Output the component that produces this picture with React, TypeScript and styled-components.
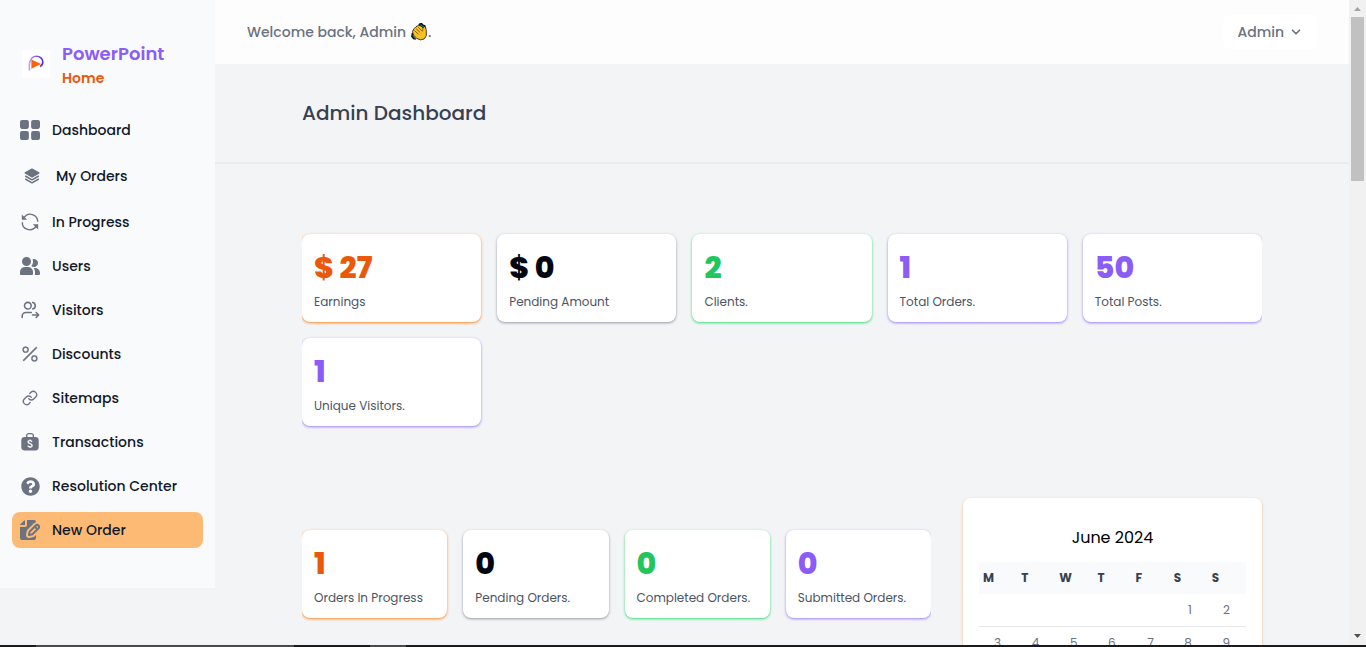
import React from "react";
import styled, { createGlobalStyle } from "styled-components";
import { BiSolidLayer } from "react-icons/bi";
import { BsPercent } from "react-icons/bs";
import { FaQuestionCircle } from "react-icons/fa";
import { LuChevronDown, LuLink } from "react-icons/lu";

const GlobalStyle = createGlobalStyle`
  *, *::before, *::after { box-sizing: border-box; }
  body {
    margin: 0;
    overflow: hidden;
    background: #f3f4f6;
    font-family: Poppins, Inter, "Liberation Sans", sans-serif;
  }
  h1, h2, p, ul, dl, dd { margin: 0; padding: 0; }
  a { color: inherit; text-decoration: none; }
`;

const Screen = styled.div`
  display: flex;
  flex-direction: column;
  height: 100vh;
`;

const Viewport = styled.div`
  display: flex;
  flex: 1;
  min-height: 0;
`;

const Page = styled.div`
  display: flex;
  flex: 1;
  align-items: flex-start;
  min-width: 0;
  overflow: hidden;
`;

const Sidebar = styled.aside`
  flex: none;
  width: 215px;
  padding: 40px 12px;
  background: #f9fafc;
`;

const Brand = styled.div`
  display: flex;
  align-items: center;
  gap: 12px;
  height: 48px;
  margin: 0 0 24px 10px;
`;

const LogoBox = styled.span`
  display: grid;
  place-items: center;
  width: 28px;
  height: 28px;
  background: #fff;
`;

const BrandName = styled.a`
  display: block;
  font-size: 18px;
  font-weight: 600;
  line-height: 28px;
  color: #8b5cf6;
`;

const BrandHome = styled.a`
  display: block;
  font-size: 14px;
  font-weight: 600;
  line-height: 20px;
  color: #ea580c;
`;

const NavList = styled.ul`
  display: flex;
  flex-direction: column;
  gap: 8px;
  list-style: none;
`;

const NavLink = styled.a<{ $active?: boolean }>`
  display: flex;
  align-items: center;
  gap: 12px;
  padding: 8px;
  border-radius: 8px;
  background: ${(p) => (p.$active ? "#fdba74" : "transparent")};
  font-size: 14px;
  font-weight: 500;
  line-height: 20px;
  color: #111827;
`;

const IconSlot = styled.span<{ $size: number }>`
  display: grid;
  place-items: center;
  width: ${(p) => p.$size}px;
  height: ${(p) => p.$size}px;
  color: #6b7280;
`;

const Main = styled.main`
  flex: 1;
  min-width: 0;
`;

const TopBar = styled.header`
  display: flex;
  align-items: center;
  justify-content: space-between;
  height: 64px;
  padding: 0 32px;
  background: #fdfdfd;
  font-size: 14px;
  font-weight: 500;
  color: #6b7280;
`;

const Greeting = styled.p`
  display: flex;
  align-items: center;
  line-height: 20px;
  svg { margin-left: 5px; }
`;

const UserButton = styled.button`
  display: flex;
  align-items: center;
  gap: 5px;
  padding: 7px 14px;
  border: 0;
  border-radius: 6px;
  background: #fff;
  font: inherit;
  line-height: 20px;
  color: inherit;
`;

const TitleBar = styled.div`
  border-bottom: 2px solid #e9ebee;
  padding: 32px 0;
`;

const Container = styled.div`
  max-width: 960px;
  margin: 0 auto;
`;

const Title = styled.h1`
  font-size: 20px;
  font-weight: 500;
  line-height: 34px;
  color: #374151;
`;

const Stats = styled.dl<{ $columns: number }>`
  display: grid;
  grid-template-columns: repeat(${(p) => p.$columns}, minmax(0, 1fr));
  gap: 16px;
  padding: 4px 0;
  overflow: hidden;
`;

const Card = styled.div<{ $glow: string }>`
  display: flex;
  flex-direction: column-reverse;
  justify-content: flex-end;
  gap: 2px;
  height: 88px;
  padding: 12px;
  border-radius: 8px;
  background: #fff;
  box-shadow: 0 1px 3px 0 ${(p) => p.$glow}, 0 1px 2px -1px ${(p) => p.$glow};
`;

const CardValue = styled.dd<{ $color: string }>`
  font-size: 30px;
  font-weight: 800;
  line-height: 44px;
  color: ${(p) => p.$color};
`;

const CardLabel = styled.dt`
  font-size: 12px;
  line-height: 20px;
  white-space: nowrap;
  color: #4b5563;
`;

const Overview = styled(Container)`
  padding: 66px 0 68px;
`;

const OrdersRow = styled(Container)`
  display: grid;
  grid-template-columns: 1fr 299px;
  gap: 32px;
  align-items: start;
`;

const OrderStats = styled.div`
  padding-top: 28px;
`;

const CalendarCard = styled.section`
  padding: 24px 16px;
  border-radius: 8px;
  background: #fff;
  box-shadow: 0 1px 3px 0 #fdba8c, 0 1px 2px -1px #fdba8c;
`;

const Month = styled.h2`
  margin-bottom: 8px;
  font-size: 16px;
  font-weight: 400;
  line-height: 32px;
  text-align: center;
  color: #000;
`;

const Days = styled.table`
  width: 100%;
  table-layout: fixed;
  border-collapse: collapse;
  font-size: 12px;
  line-height: 16px;
  th {
    padding: 8px 4px;
    background: #f9fafb;
    font-weight: 700;
    text-align: left;
    color: #374151;
  }
  td {
    padding: 8px 16px 8px 0;
    font-weight: 400;
    text-align: right;
    color: #6b7280;
  }
  tbody tr { border-bottom: 1px solid #e5e7eb; }
`;

const Scrollbar = styled.div`
  display: flex;
  flex-direction: column;
  flex: none;
  align-items: center;
  justify-content: space-between;
  width: 17px;
  background: #f1f1f1;
`;

const ScrollArrow = styled.span<{ $down?: boolean }>`
  display: grid;
  place-items: center;
  width: 17px;
  height: 17px;
  color: ${(p) => (p.$down ? "#505050" : "#a3a3a3")};
  transform: ${(p) => (p.$down ? "rotate(180deg)" : "none")};
`;

const Thumb = styled.span`
  width: 13px;
  height: 164px;
  margin-bottom: auto;
  background: #c1c1c1;
`;

const Taskbar = styled.div`
  flex: none;
  height: 2px;
  background: linear-gradient(
    90deg,
    #1b1b1b 36px, #4c4a4c 36px 294px, #1b1b1b 294px 370px, #4a4a4a 370px 406px, #1b1b1b 406px
  );
`;

const GridIcon = () => (
  <svg width="20" height="20" viewBox="0 0 18 18" fill="currentColor">
    <path d="M6.143 0H1.857A1.857 1.857 0 0 0 0 1.857v4.286C0 7.169.831 8 1.857 8h4.286A1.857 1.857 0 0 0 8 6.143V1.857A1.857 1.857 0 0 0 6.143 0Zm10 0h-4.286A1.857 1.857 0 0 0 10 1.857v4.286C10 7.169 10.831 8 11.857 8h4.286A1.857 1.857 0 0 0 18 6.143V1.857A1.857 1.857 0 0 0 16.143 0Zm-10 10H1.857A1.857 1.857 0 0 0 0 11.857v4.286C0 17.169.831 18 1.857 18h4.286A1.857 1.857 0 0 0 8 16.143v-4.286A1.857 1.857 0 0 0 6.143 10Zm10 0h-4.286A1.857 1.857 0 0 0 10 11.857v4.286c0 1.026.831 1.857 1.857 1.857h4.286A1.857 1.857 0 0 0 18 16.143v-4.286A1.857 1.857 0 0 0 16.143 10Z" />
  </svg>
);

const RefreshIcon = () => (
  <svg width="20" height="20" viewBox="0 0 24 24" fill="none" stroke="currentColor" strokeWidth="1.7">
    <path d="M4.800 6.700A9 9 0 0 1 21.300 11.800M19.200 17.300A9 9 0 0 1 2.700 12.200" />
    <path d="M2.200 3v6.400h6.400ZM21.800 21v-6.400h-6.400Z" fill="currentColor" stroke="none" />
  </svg>
);

const UsersIcon = () => (
  <svg width="20" height="20" viewBox="0 0 20 18" fill="currentColor">
    <path d="M14 2a3.963 3.963 0 0 0-1.4.267 6.439 6.439 0 0 1-1.331 6.638A4 4 0 1 0 14 2Zm1 9h-1.264A6.957 6.957 0 0 1 15 15v2a2.97 2.97 0 0 1-.184 1H19a1 1 0 0 0 1-1v-1a5.006 5.006 0 0 0-5-5ZM6.5 9a4.5 4.5 0 1 0 0-9 4.5 4.5 0 0 0 0 9ZM8 10H5a5.006 5.006 0 0 0-5 5v2a1 1 0 0 0 1 1h11a1 1 0 0 0 1-1v-2a5.006 5.006 0 0 0-5-5Z" />
  </svg>
);

const VisitorsIcon = () => (
  <svg width="20" height="20" viewBox="0 0 24 24" fill="none" stroke="currentColor" strokeWidth="1.9" strokeLinecap="round" strokeLinejoin="round">
    <circle cx="9.4" cy="6.8" r="4" />
    <path d="M2.6 21v-1.5a4.5 4.5 0 0 1 4.5-4.5h6.4M15.2 2.9a4 4 0 0 1 0 7.8M15 18h7.4M19.4 15l3 3-3 3" />
  </svg>
);

const MoneyBagIcon = () => (
  <svg width="20" height="20" viewBox="0 0 20 20" fill="none" stroke="currentColor">
    <path d="M6.700 5.500V3.600A2 2 0 0 1 8.700 1.600h2.600a2 2 0 0 1 2 2v1.900" strokeWidth="1.300" />
    <rect x="1.300" y="5" width="17.400" height="13.500" rx="3.400" fill="currentColor" stroke="none" />
    <path d="M12 9.900c-.2-.8-1-1.200-2-1.200-1.100 0-2 .5-2 1.400 0 2.100 4.100 1.100 4.100 3.300 0 .9-.9 1.500-2.100 1.500-1.100 0-2-.4-2.200-1.300M10 7.500v1.200M10 14.800v1.200" stroke="#fff" strokeWidth="1.300" />
  </svg>
);

const NewOrderIcon = () => (
  <svg width="20" height="20" viewBox="0 0 20 20" fill="currentColor">
    <path d="M5 5V.13a2.96 2.96 0 0 0-1.293.749L.879 3.707A2.98 2.98 0 0 0 .13 5H5Z" />
    <path d="M6.737 11.061a2.961 2.961 0 0 1 .81-1.515l6.117-6.116A4.839 4.839 0 0 1 16 2.141V2a1.97 1.97 0 0 0-1.933-2H7v5a2 2 0 0 1-2 2H0v11a1.969 1.969 0 0 0 1.933 2h12.134A1.97 1.97 0 0 0 16 18v-3.093l-1.546 1.546c-.413.413-.94.695-1.513.81l-3.4.679a2.947 2.947 0 0 1-1.85-.227 2.96 2.96 0 0 1-1.635-3.257l.681-3.397Z" />
    <path d="M8.961 16a.93.93 0 0 0 .189-.019l3.4-.679a.961.961 0 0 0 .49-.263l6.118-6.117a2.884 2.884 0 0 0-4.079-4.078l-6.117 6.117a.96.96 0 0 0-.263.491l-.679 3.4A.961.961 0 0 0 8.961 16Zm7.477-9.8a.958.958 0 0 1 .68-.281.961.961 0 0 1 .682 1.644l-.315.315-1.36-1.36.313-.318Zm-5.911 5.911 4.236-4.236 1.359 1.359-4.236 4.237-1.7.339.341-1.699Z" />
  </svg>
);

const Logo = () => (
  <svg width="18" height="18" viewBox="0 0 18 18" fill="none">
    <defs>
      <linearGradient id="ring" x1="0" y1="0" x2="1" y2="0">
        <stop offset="0" stopColor="#b9a3ee" />
        <stop offset="1" stopColor="#5b21d6" />
      </linearGradient>
    </defs>
    <path d="M2.600 15.500C2.400 13 2 10.500 2.600 7.600 3.600 3.600 6 1.300 9.400 1.300c3.600 0 6.400 2.500 6.400 5.700 0 2-1 3.700-2.800 4.600" stroke="url(#ring)" strokeWidth="1.600" />
    <path d="M4.400 4.400 14 9 4.400 13.800Z" fill="#f8650c" />
  </svg>
);

const ClapIcon = () => (
  <svg width="17" height="18" viewBox="0 0 17 18" role="img" aria-label="Waving hand">
    <path d="M8 2.500 8.500 1 10.600.6l1.500 1.600 1.700.6.400 3M1.500 10 .8 13.500l1.800 2.200 2.300.4" fill="#16697a" stroke="#111" strokeWidth="1.400" />
    <path d="M1.500 8.600 2.900 5.900 5 3.700 7.800 2.300 10 3.100 12 5l.8-1.400 1.600.2.900 3.700v5.300l-2.300 3.200-3.600.9-3.600-1.500L2.400 12Z" fill="#fcc021" stroke="#111" strokeWidth=".8" strokeLinejoin="round" />
    <path d="m3.500 7.600 4 3.700M5.100 5.600l4 3.800M7.100 4.200l3.900 3.700M12 5l-.4 3.400" fill="none" stroke="#6b4a10" strokeWidth=".8" />
  </svg>
);

const nav = [
  { label: "Dashboard", icon: <GridIcon /> },
  { label: "My Orders", icon: <BiSolidLayer size={18} />, slot: 24 },
  { label: "In Progress", icon: <RefreshIcon /> },
  { label: "Users", icon: <UsersIcon /> },
  { label: "Visitors", icon: <VisitorsIcon /> },
  { label: "Discounts", icon: <BsPercent size={20} strokeWidth={0.2} /> },
  { label: "Sitemaps", icon: <LuLink size={16} /> },
  { label: "Transactions", icon: <MoneyBagIcon /> },
  { label: "Resolution Center", icon: <FaQuestionCircle size={19} /> },
  { label: "New Order", icon: <NewOrderIcon />, active: true },
];

const tones = {
  orange: { color: "#ea580c", glow: "#fb923c" },
  black: { color: "#030712", glow: "#9ca3af" },
  green: { color: "#22c55e", glow: "#4ade80" },
  violet: { color: "#8b5cf6", glow: "#a78bfa" },
};

type Stat = { value: string; label: string; tone: keyof typeof tones };

const overview: Stat[] = [
  { value: "$ 27", label: "Earnings", tone: "orange" },
  { value: "$ 0", label: "Pending Amount", tone: "black" },
  { value: "2", label: "Clients.", tone: "green" },
  { value: "1", label: "Total Orders.", tone: "violet" },
  { value: "50", label: "Total Posts.", tone: "violet" },
  { value: "1", label: "Unique Visitors.", tone: "violet" },
];

const orders: Stat[] = [
  { value: "1", label: "Orders In Progress", tone: "orange" },
  { value: "0", label: "Pending Orders.", tone: "black" },
  { value: "0", label: "Completed Orders.", tone: "green" },
  { value: "0", label: "Submitted Orders.", tone: "violet" },
];

const weeks = [
  ["", "", "", "", "", "1", "2"],
  ["3", "4", "5", "6", "7", "8", "9"],
];

const StatGrid = ({ stats, columns }: { stats: Stat[]; columns: number }) => (
  <Stats $columns={columns}>
    {stats.map((s) => (
      <Card key={s.label} $glow={tones[s.tone].glow}>
        <CardLabel>{s.label}</CardLabel>
        <CardValue $color={tones[s.tone].color}>{s.value}</CardValue>
      </Card>
    ))}
  </Stats>
);

const Arrow = () => (
  <svg width="7" height="4" viewBox="0 0 7 4" fill="currentColor">
    <path d="M0 4 3.500 0 7 4Z" />
  </svg>
);

export default function App() {
  return (
    <Screen>
      <GlobalStyle />
      <Viewport>
        <Page>
          <Sidebar>
            <Brand>
              <LogoBox><Logo /></LogoBox>
              <div>
                <BrandName href="#">PowerPoint</BrandName>
                <BrandHome href="#">Home</BrandHome>
              </div>
            </Brand>
            <nav>
              <NavList>
                {nav.map((n) => (
                  <li key={n.label}>
                    <NavLink href="#" $active={n.active}>
                      <IconSlot $size={n.slot ?? 20}>{n.icon}</IconSlot>
                      {n.label}
                    </NavLink>
                  </li>
                ))}
              </NavList>
            </nav>
          </Sidebar>
          <Main>
            <TopBar>
              <Greeting>Welcome back, Admin <ClapIcon />.</Greeting>
              <UserButton type="button">
                Admin
                <LuChevronDown size={14} strokeWidth={3} />
              </UserButton>
            </TopBar>
            <TitleBar>
              <Container><Title>Admin Dashboard</Title></Container>
            </TitleBar>
            <Overview><StatGrid stats={overview} columns={5} /></Overview>
            <OrdersRow>
              <OrderStats><StatGrid stats={orders} columns={4} /></OrderStats>
              <CalendarCard>
                <Month>June 2024</Month>
                <Days>
                  <thead>
                    <tr>{["M", "T", "W", "T", "F", "S", "S"].map((d, i) => <th key={i} scope="col">{d}</th>)}</tr>
                  </thead>
                  <tbody>
                    {weeks.map((week, w) => (
                      <tr key={w}>{week.map((d, i) => <td key={i}>{d}</td>)}</tr>
                    ))}
                  </tbody>
                </Days>
              </CalendarCard>
            </OrdersRow>
          </Main>
        </Page>
        <Scrollbar>
          <ScrollArrow><Arrow /></ScrollArrow>
          <Thumb />
          <ScrollArrow $down><Arrow /></ScrollArrow>
        </Scrollbar>
      </Viewport>
      <Taskbar />
    </Screen>
  );
}
